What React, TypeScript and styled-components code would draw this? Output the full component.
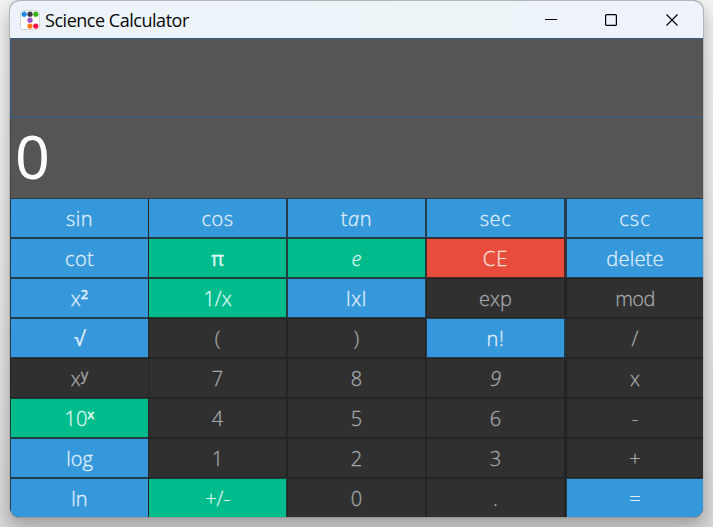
import React from "react";
import styled, { createGlobalStyle } from "styled-components";

const GlobalStyle = createGlobalStyle`
  * { box-sizing: border-box; }
  html, body { margin: 0; height: 100%; overflow: hidden; }
  body { background: #f3f3f3; }
`;

type Tone = "dark" | "blue" | "green" | "red";

const tones: Record<Tone, { fill: string; edge: string; text: string }> = {
  dark: { fill: "#303030", edge: "#242424", text: "#a3a8ac" },
  blue: { fill: "#3498db", edge: "#263b4a", text: "#e1effa" },
  green: { fill: "#00bc8c", edge: "#203e37", text: "#dcf7f0" },
  red: { fill: "#e74c3c", edge: "#482b28", text: "#fbe2df" },
};

const Desktop = styled.main`
  width: 713px;
  height: 527px;
  padding: 0 9px;
  overflow: hidden;
  background: linear-gradient(#f3f3f3, #e9e9e9 50%, #d8d8d8);
`;

const Window = styled.section`
  width: 695px;
  height: 518px;
  border: 1px solid #b4b4b4;
  border-bottom-color: #999;
  border-radius: 10px;
  overflow: hidden;
  background: #555;
  box-shadow: 0 8px 18px rgba(0, 0, 0, 0.28);
`;

const TitleBar = styled.header`
  height: 37px;
  display: flex;
  align-items: center;
  padding: 0 1px 0 10px;
  background: linear-gradient(90deg, #eef3fb, #ebf4f7 70%, #eef3fb 80%);
`;

const Title = styled.h1`
  flex: 1;
  margin: 0 0 0 5px;
  font: 400 18px/36px "Open Sans", sans-serif;
  letter-spacing: -0.47px;
  color: #080808;
`;

const WindowControl = styled.button`
  width: 61px;
  height: 37px;
  display: grid;
  place-items: center;
  padding: 0;
  border: 0;
  background: none;
`;

const Expression = styled.div`
  height: 80px;
  border: 1px solid #33608a;
  border-right: 0;
  background: #555;
`;

const Result = styled.div`
  height: 80px;
  padding-left: 4px;
  border-left: 1px solid #444;
  font: 400 61px/75px "Noto Sans", sans-serif;
  color: #fff;
`;

const Keypad = styled.div`
  display: grid;
  grid-template-columns: 138px 139px 139px 140px 137px;
  grid-template-rows: repeat(7, 40px) 39px;
`;

const Key = styled.button<{ $tone: Tone; $spacing?: number; $weight?: number }>`
  min-width: 0;
  display: flex;
  justify-content: center;
  align-items: center;
  padding: 2px 0 0;
  border: 1px solid ${(p) => tones[p.$tone].edge};
  background: ${(p) => tones[p.$tone].fill};
  color: ${(p) => tones[p.$tone].text};
  font: ${(p) => p.$weight ?? 300} 20px/36px "Open Sans", "Noto Sans", sans-serif;
  -webkit-text-stroke: 0.3px currentColor;
  letter-spacing: ${(p) => p.$spacing ?? 0}px;
  &:nth-child(5n + 1) { border-right-width: 0; }
  &:nth-child(5n + 2) { border-left-color: #242424; }
  &:nth-child(5n + 4) { border-right-width: 2px; }
  &:nth-child(5n) { border-right-width: 0; }
  &:nth-child(n + 36) { border-bottom-width: 0; }
`;

const Exponent = styled.span<{ $bold?: boolean }>`
  align-self: flex-start;
  margin-top: -5px;
  font-size: ${(p) => (p.$bold ? 13 : 15)}px;
  font-weight: ${(p) => (p.$bold ? 600 : 400)};
`;

const Slant = styled.span`
  font-style: italic;
`;

interface KeyData {
  label: string;
  tone?: Tone;
  exponent?: string;
  spacing?: number;
  weight?: number;
}

const keys: KeyData[] = [
  { label: "sin", tone: "blue", spacing: 0.4 },
  { label: "cos", tone: "blue", spacing: 0.5 },
  { label: "tan", tone: "blue", spacing: 0.6 },
  { label: "sec", tone: "blue", spacing: 0.6 },
  { label: "csc", tone: "blue", spacing: 1 },
  { label: "cot", tone: "blue", spacing: 0.3 },
  { label: "π", tone: "green", weight: 400 },
  { label: "e", tone: "green" },
  { label: "CE", tone: "red", spacing: 1 },
  { label: "delete", tone: "blue", spacing: 0.2 },
  { label: "x", exponent: "2", tone: "blue" },
  { label: "1/x", tone: "green" },
  { label: "lxl", tone: "blue", spacing: 0.6 },
  { label: "exp" },
  { label: "mod", spacing: -0.6 },
  { label: "√", tone: "blue", weight: 500 },
  { label: "(" },
  { label: ")" },
  { label: "n!", tone: "blue", spacing: 0.6 },
  { label: "/" },
  { label: "x", exponent: "y" },
  { label: "7" },
  { label: "8" },
  { label: "9" },
  { label: "x" },
  { label: "10", exponent: "x", tone: "green" },
  { label: "4" },
  { label: "5" },
  { label: "6" },
  { label: "-" },
  { label: "log", tone: "blue", spacing: -0.1 },
  { label: "1" },
  { label: "2" },
  { label: "3" },
  { label: "+" },
  { label: "ln", tone: "blue" },
  { label: "+/-", tone: "green" },
  { label: "0" },
  { label: "." },
  { label: "=", tone: "blue" },
];

const KeyLabel = ({ text }: { text: string }) => (
  <span>
    {[...text].map((letter, i) =>
      letter === "a" || text === "e" || text === "9" ? (
        <Slant key={i}>{letter}</Slant>
      ) : (
        letter
      )
    )}
  </span>
);

const AppIcon = () => (
  <svg width="20" height="20" viewBox="0 0 20 20">
    <rect x="0.5" y="0.5" width="19" height="19" rx="2" fill="#fff" stroke="#d2d5da" />
    <circle cx="4.2" cy="4.2" r="2.6" fill="#2588e8" />
    <circle cx="10" cy="4.2" r="2.6" fill="#393a46" />
    <circle cx="15.8" cy="4.2" r="2.6" fill="#3bb51c" />
    <circle cx="10" cy="10.2" r="2.6" fill="#9a50c8" />
    <circle cx="10" cy="16.1" r="2.6" fill="#ff7a1a" />
    <circle cx="15.8" cy="16.1" r="2.6" fill="#ff0a44" />
  </svg>
);

export default function App() {
  return (
    <Desktop>
      <GlobalStyle />
      <Window>
        <TitleBar>
          <AppIcon />
          <Title>Science Calculator</Title>
          <WindowControl aria-label="Minimize">
            <svg width="14" height="12"><path d="M2 5.5H14" stroke="#000" /></svg>
          </WindowControl>
          <WindowControl aria-label="Maximize">
            <svg width="12" height="12"><rect x="0.6" y="0.6" width="10.8" height="10.8" rx="1" fill="none" stroke="#000" strokeWidth="1.2" /></svg>
          </WindowControl>
          <WindowControl aria-label="Close">
            <svg width="12" height="12"><path d="M.5 .5L11.5 11.5M11.5 .5L.5 11.5" stroke="#000" strokeWidth="1.2" /></svg>
          </WindowControl>
        </TitleBar>
        <Expression />
        <Result>0</Result>
        <Keypad>
          {keys.map((k, i) => (
            <Key key={i} $tone={k.tone ?? "dark"} $spacing={k.spacing} $weight={k.weight}>
              <KeyLabel text={k.label} />
              {k.exponent && (
                <Exponent $bold={k.tone !== undefined}>{k.exponent}</Exponent>
              )}
            </Key>
          ))}
        </Keypad>
      </Window>
    </Desktop>
  );
}
